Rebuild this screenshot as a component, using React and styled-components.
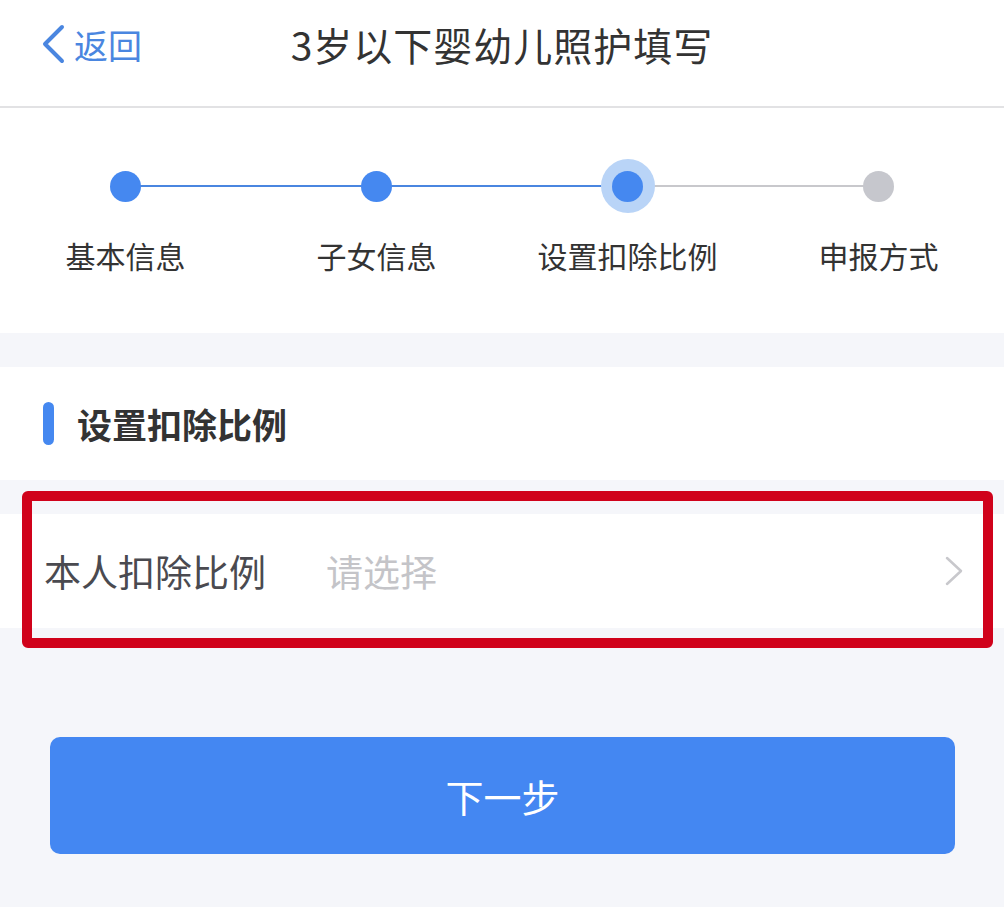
import React from 'react'
import styled, { createGlobalStyle } from 'styled-components'

const GlobalStyle = createGlobalStyle`
  body {
    margin: 0;
    background: #f5f6fa;
    font-family: "Noto Sans CJK SC", "Noto Sans", sans-serif;
  }
`;

const Page = styled.div`
  position: relative;
  width: 1004px;
  min-height: 907px;
  background: #f5f6fa;
`;

const Header = styled.header`
  height: 106px;
  background: #fff;
  border-bottom: 2px solid #e2e2e4;
  display: grid;
  grid-template-columns: 200px 1fr 200px;
  align-items: center;
`;

const Back = styled.div`
  display: flex;
  align-items: center;
  padding-left: 40px;
  color: #4a86e0;
  font-size: 34px;
  gap: 8px;
  margin-top: -18px;
`;

const Title = styled.h1`
  margin: -19px 0 0;
  text-align: center;
  font-size: 39px;
  font-weight: 400;
  color: #333;
  letter-spacing: 1px;
`;

const Stepper = styled.section`
  background: #fff;
  padding: 51px 0 55px;
`;

const DotRow = styled.div`
  display: flex;
  align-items: center;
  padding: 0 98.5px;
`;

const DotWrap = styled.div`
  position: relative;
  z-index: 1;
  width: 54px;
  height: 54px;
  flex: none;
  display: flex;
  align-items: center;
  justify-content: center;
  border-radius: 50%;
  background: ${p => (p.$current ? '#b9d4f7' : 'transparent')};
`;

const Dot = styled.div`
  width: 31px;
  height: 31px;
  border-radius: 50%;
  background: ${p => (p.$done ? '#4588f0' : '#c6c7cd')};
`;

const Line = styled.div`
  flex: 1;
  height: 2px;
  margin: 0 -13px;
  background: ${p => (p.$done ? '#4a86e0' : '#c8c8cc')};
`;

const Labels = styled.div`
  display: grid;
  grid-template-columns: repeat(4, 1fr);
  margin-top: 22px;
  margin-bottom: 3px;
`;

const Label = styled.div`
  text-align: center;
  font-size: 30px;
  line-height: 40px;
  color: #333;
`;

const SectionHead = styled.div`
  margin-top: 34px;
  height: 113px;
  background: #fff;
  display: flex;
  align-items: center;
  padding-left: 43px;
  gap: 23px;
`;

const Bar = styled.span`
  width: 11px;
  height: 43px;
  border-radius: 6px;
  background: #4588f0;
`;

const SectionTitle = styled.h2`
  margin: 0;
  font-size: 35px;
  font-weight: 700;
  color: #333;
`;

const Row = styled.div`
  margin-top: 34px;
  height: 114px;
  background: #fff;
  display: flex;
  align-items: center;
  padding: 0 40px 0 44px;
`;

const RowLabel = styled.span`
  width: 282px;
  font-size: 37px;
  color: #4a4a50;
`;

const Placeholder = styled.span`
  flex: 1;
  font-size: 37px;
  color: #c4c4c8;
`;

const Highlight = styled.div`
  position: absolute;
  left: 22px;
  top: 491px;
  width: 971px;
  height: 157px;
  box-sizing: border-box;
  border: 10px solid #d0021b;
  border-radius: 6px;
  pointer-events: none;
`;

const NextButton = styled.button`
  display: block;
  margin: 109px 49px 0 50px;
  width: 905px;
  height: 117px;
  border: none;
  border-radius: 10px;
  background: #4487f2;
  color: #fff;
  font-family: inherit;
  font-size: 38px;
`;

const steps = ['基本信息', '子女信息', '设置扣除比例', '申报方式'];
const current = 2;

export default function App() {
  return (
    <Page>
      <GlobalStyle />
      <Header>
        <Back>
          <svg width="26" height="40" viewBox="0 0 26 40">
            <polyline points="22,3 5,20 22,37" fill="none" stroke="#4a86e0" strokeWidth="4" strokeLinecap="round" strokeLinejoin="round" />
          </svg>
          返回
        </Back>
        <Title>3岁以下婴幼儿照护填写</Title>
        <div />
      </Header>

      <Stepper>
        <DotRow>
          {steps.map((s, i) => (
            <React.Fragment key={s}>
              {i > 0 && <Line $done={i <= current} />}
              <DotWrap $current={i === current}>
                <Dot $done={i <= current} />
              </DotWrap>
            </React.Fragment>
          ))}
        </DotRow>
        <Labels>
          {steps.map(s => (
            <Label key={s}>{s}</Label>
          ))}
        </Labels>
      </Stepper>

      <SectionHead>
        <Bar />
        <SectionTitle>设置扣除比例</SectionTitle>
      </SectionHead>

      <Row>
        <RowLabel>本人扣除比例</RowLabel>
        <Placeholder>请选择</Placeholder>
        <svg width="20" height="32" viewBox="0 0 20 32">
          <polyline points="3,3 17,16 3,29" fill="none" stroke="#c8c8cc" strokeWidth="2.5" strokeLinecap="round" strokeLinejoin="round" />
        </svg>
      </Row>

      <NextButton>下一步</NextButton>

      <Highlight />
    </Page>
  )
}
